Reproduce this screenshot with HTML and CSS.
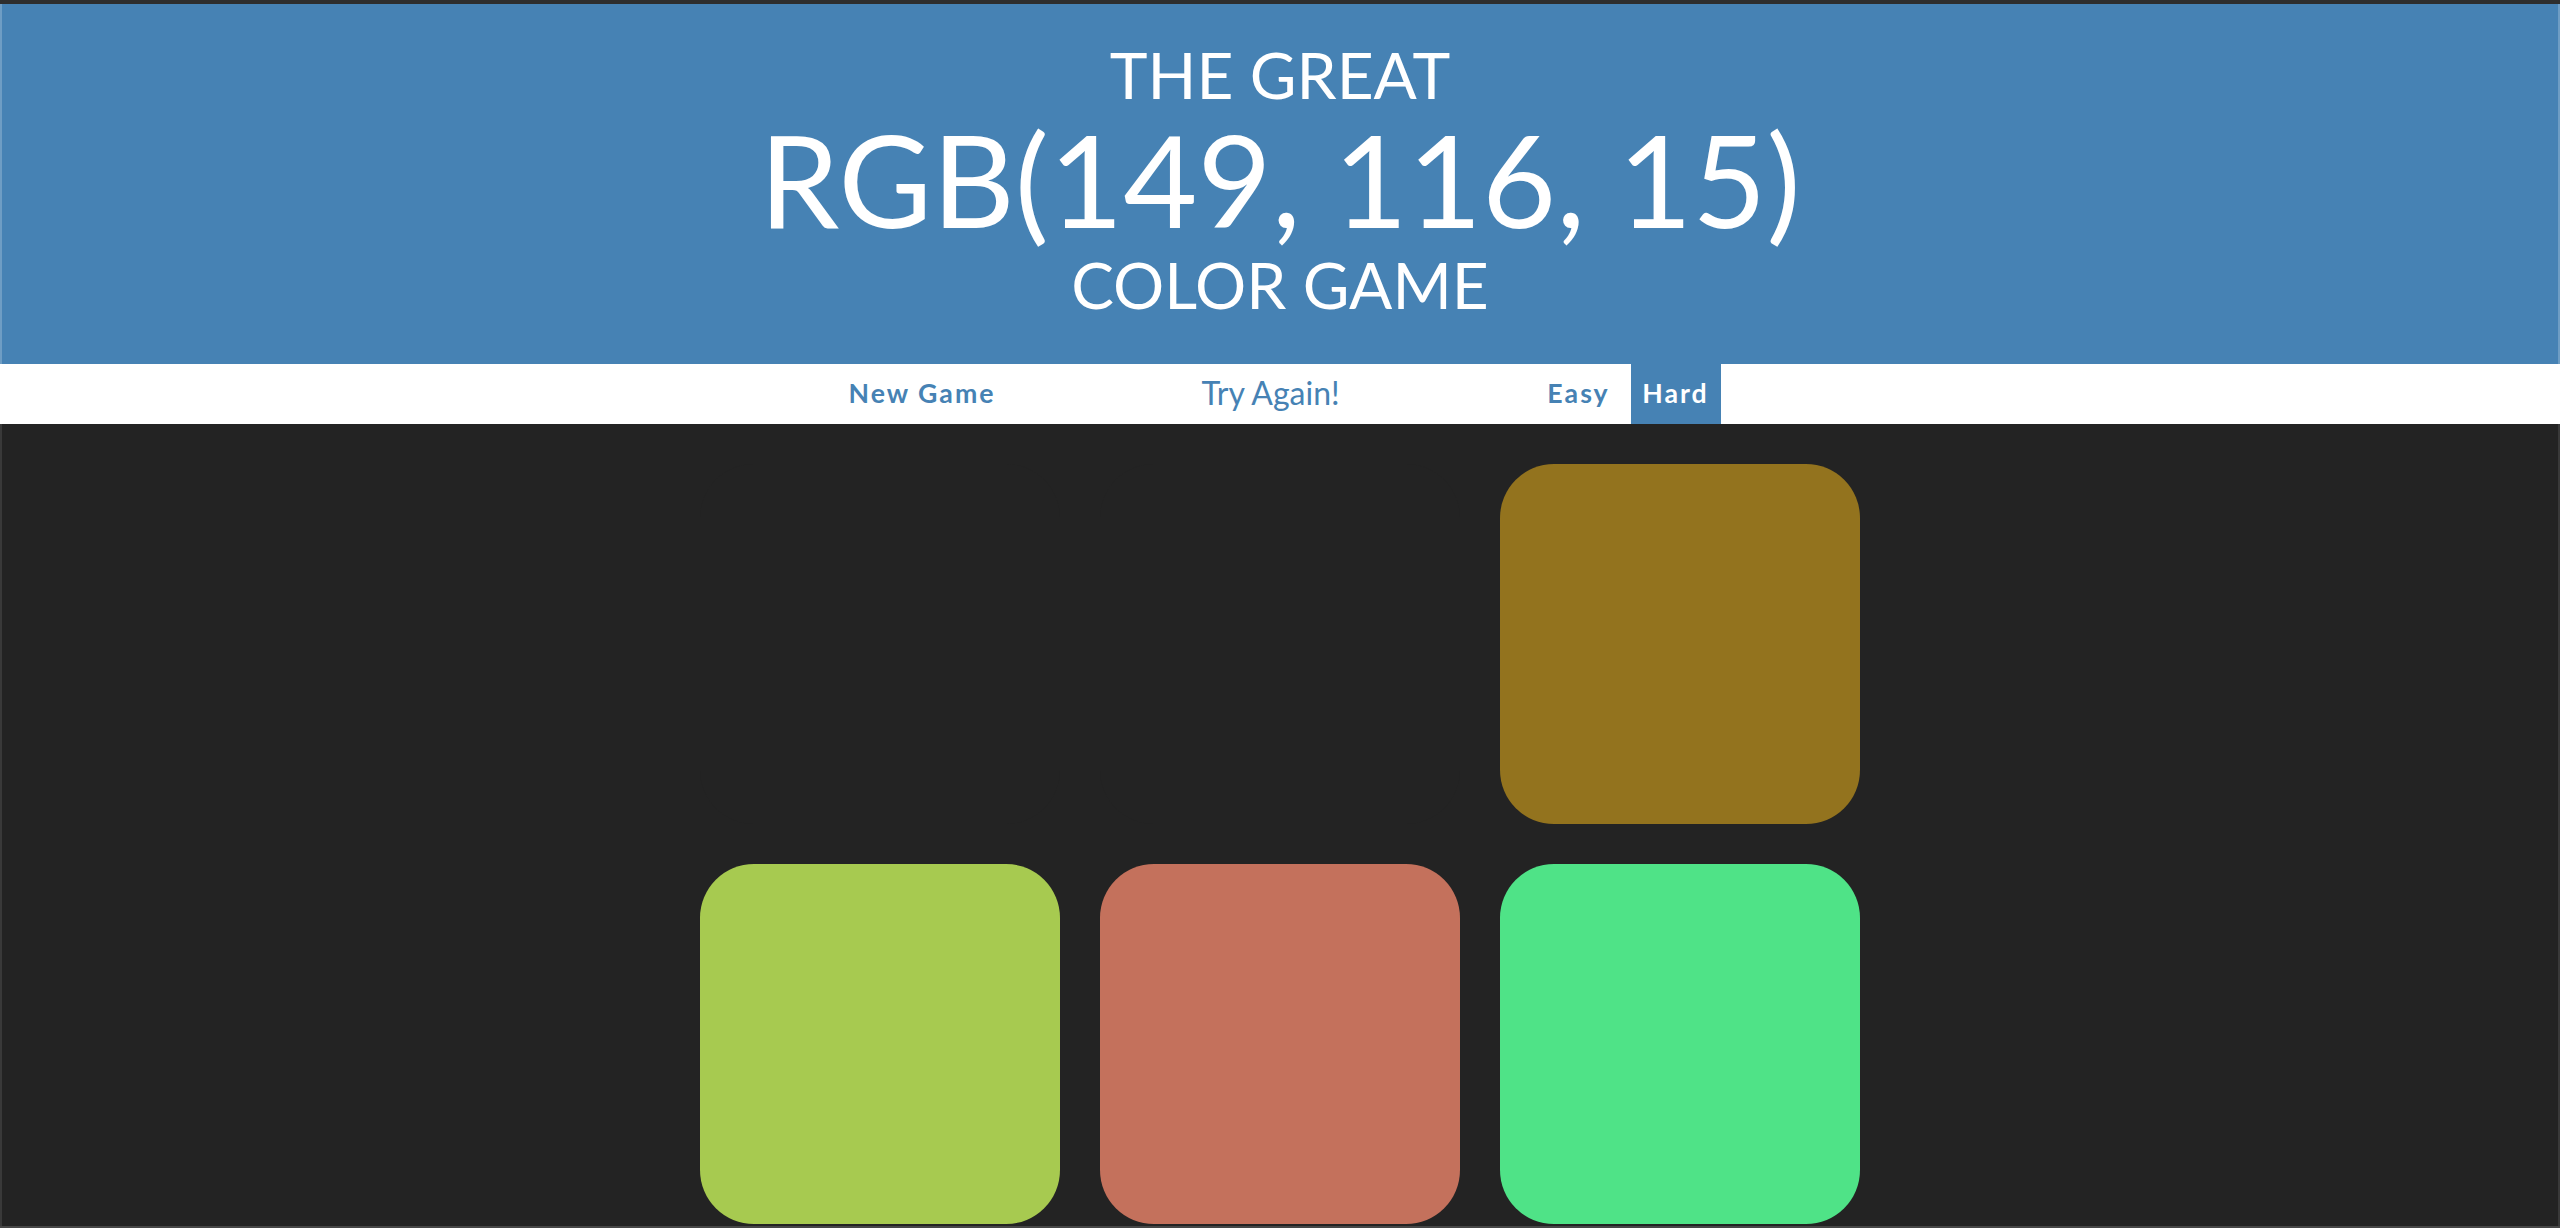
FILE: index.html
```html
<!DOCTYPE html>
<html lang="en">
<head>
<meta charset="utf-8">
<title>Color Game</title>
<link rel="stylesheet" href="styles.css">
</head>
<body>
<div class="window">
  <div class="titlebar"></div>
  <h1 class="header">
    <span class="line">The Great</span>
    <span class="line big">RGB(149, 116, 15)</span>
    <span class="line">Color Game</span>
  </h1>
  <nav class="stripe">
    <button class="btn btn-new">New Game</button>
    <span class="message">Try Again!</span>
    <button class="btn btn-easy">Easy</button>
    <button class="btn btn-hard selected">Hard</button>
  </nav>
  <main class="board">
    <div class="grid">
      <div class="square hidden"></div>
      <div class="square hidden"></div>
      <div class="square gold"></div>
      <div class="square lime"></div>
      <div class="square salmon"></div>
      <div class="square mint"></div>
    </div>
  </main>
</div>
</body>
</html>
```

FILE: styles.css
```css
html, body {
  margin: 0;
  padding: 0;
  height: 100%;
}

body {
  background: #232323;
  font-family: "Lato", "Open Sans", sans-serif;
  overflow: hidden;
}

.window {
  height: 1228px;
  display: flex;
  flex-direction: column;
  border-bottom: 2px solid #474747;
  box-sizing: border-box;
}

.titlebar {
  height: 4px;
  flex: 0 0 4px;
  background: #2e2e2e;
}

.header {
  margin: 0;
  padding: 36px 0 44px;
  background: #4682b4;
  color: #fff;
  text-align: center;
  font-weight: 400;
  font-size: 64px;
  line-height: 1.1;
  text-transform: uppercase;
  border-left: 2px solid rgba(255, 255, 255, 0.22);
  border-right: 2px solid rgba(255, 255, 255, 0.22);
  flex: 0 0 auto;
  height: 360px;
  box-sizing: border-box;
}

.line {
  display: block;
}

.big {
  font-size: 128px;
  margin-top: -1px;
}

.stripe {
  height: 60px;
  flex: 0 0 60px;
  background: #fff;
  display: flex;
  justify-content: center;
  align-items: stretch;
  gap: 10px;
}

.btn {
  border: none;
  background: none;
  margin: 0;
  padding: 0 0 2px;
  height: 100%;
  font-family: inherit;
  font-weight: 700;
  font-size: 26.67px;
  letter-spacing: 2px;
  color: #4682b4;
  cursor: pointer;
}

.btn-new { width: 165px; }
.btn-easy { width: 84px; }
.btn-hard { width: 90px; }

.selected {
  background: #4682b4;
  color: #fff;
}

.message {
  width: 512px;
  display: flex;
  align-items: center;
  justify-content: center;
  padding-bottom: 4px;
  box-sizing: border-box;
  font-size: 32px;
  color: #4682b4;
}

.board {
  flex: 1 1 auto;
  overflow: hidden;
  border-left: 2px solid rgba(255, 255, 255, 0.1);
  border-right: 2px solid rgba(255, 255, 255, 0.1);
  padding-top: 40px;
}

.grid {
  display: grid;
  grid-template-columns: repeat(3, 360px);
  grid-auto-rows: 360px;
  gap: 40px;
  justify-content: center;
}

.square {
  border-radius: 15%;
}

.hidden { background: #232323; }
.gold { background: rgb(147, 115, 30); }
.lime { background: #a7ca50; }
.salmon { background: #c4715c; }
.mint { background: #4fe387; }
```
